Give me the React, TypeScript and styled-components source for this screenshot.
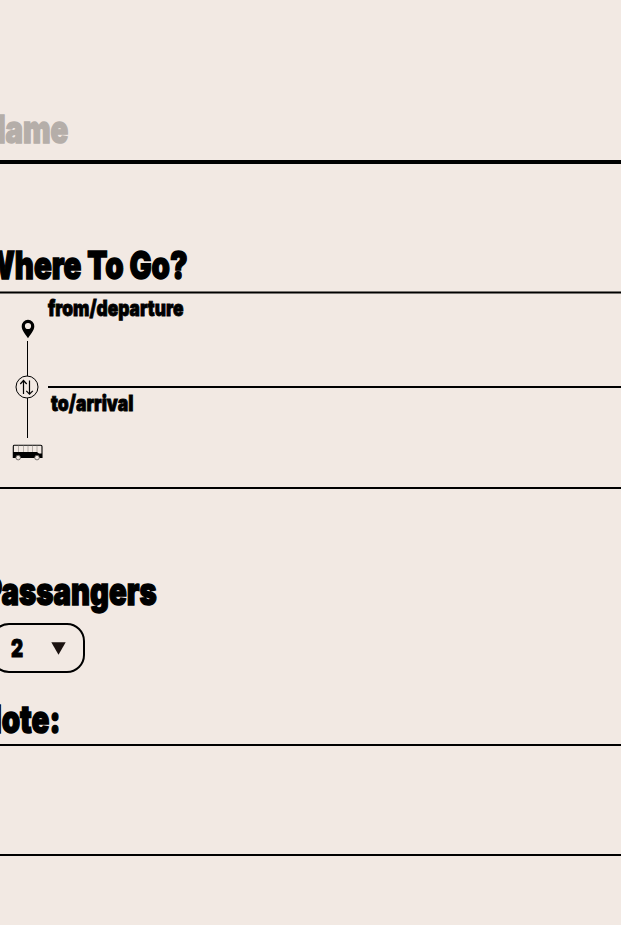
import React from "react";
import styled, { createGlobalStyle } from "styled-components";

const Global = createGlobalStyle`
  * { box-sizing: border-box; }
  html, body { margin: 0; background: #f2e9e3; overflow: hidden; }
`;

const Page = styled.main`
  height: 925px;
  overflow: hidden;
  background: #f2e9e3;
  color: #000;
  font-family: Inter, "Liberation Sans", sans-serif;
  font-weight: 900;
`;

const Poster = styled.span<{ $size: number; $squeeze: number; $muted?: boolean }>`
  display: block;
  width: max-content;
  font-size: ${(p) => p.$size}px;
  line-height: 40px;
  white-space: nowrap;
  color: ${(p) => (p.$muted ? "#b5aea9" : "#000")};
  -webkit-text-stroke: ${(p) => p.$size / 26}px currentColor;
  transform: scaleX(${(p) => p.$squeeze});
  transform-origin: 0 50%;
`;

const NameField = styled.section`
  height: 164px;
  padding: 109px 0 0;
  margin-left: -17px;
  border-bottom: 4px solid #000;
`;

const Heading = styled.h2<{ $top: number; $height: number; $start?: number }>`
  margin: 0 0 0 ${(p) => p.$start ?? -17}px;
  font: inherit;
  height: ${(p) => p.$height}px;
  padding-top: ${(p) => p.$top}px;
`;

const Route = styled.section`
  display: grid;
  grid-template-columns: 48px 1fr;
  height: 198px;
  margin-top: -1px;
  padding-top: 1px;
  border-top: 1px solid #77736f;
  border-bottom: 2px solid #000;
  box-shadow: inset 0 1px #000, inset 0 2px #77736f;
`;

const Track = styled.div`
  display: flex;
  flex-direction: column;
  padding-top: 26px;
`;

const Stops = styled.div`
  display: grid;
  grid-template-rows: 95px 1fr;
`;

const Stop = styled.div<{ $indent?: number; $last?: boolean }>`
  padding-left: ${(p) => p.$indent || 0}px;
  border-bottom: ${(p) => (p.$last ? "0" : "2px solid #000")};
  & > span { margin-top: -5px; }
`;

const Select = styled.button`
  display: flex;
  align-items: center;
  justify-content: space-between;
  width: 94px;
  height: 50px;
  margin: 0 0 0 -9px;
  padding: 0 17px 0 18px;
  border: 2px solid #000;
  border-radius: 18px;
  background: transparent;
  font: inherit;
`;

const Note = styled.div`
  height: 112px;
  border-top: 2px solid #000;
  border-bottom: 2px solid #000;
`;

const RouteIcon = () => (
  <svg width="48" height="144" viewBox="0 319 48 144" fill="none" stroke="#000">
    <path
      fill="#000"
      stroke="none"
      fillRule="evenodd"
      d="M28 319.800a6.300 6.300 0 0 0-6.300 6.400c0 4.100 3.300 7.200 6.300 12 3-4.800 6.300-7.900 6.300-12a6.300 6.300 0 0 0-6.300-6.400Zm0 3.100a3.100 3.100 0 1 1 0 6.200 3.100 3.100 0 0 1 0-6.200Z"
    />
    <path d="M27.500 341v35M27.500 398v40" />
    <circle cx="27" cy="387" r="11" strokeWidth="1" />
    <path d="M23.500 394V380.500M20.300 384l3.200-3.500 3.200 3.500M29.500 380.500v13.500M26.300 390.800l3.200 3.400 3.300-3.400" strokeWidth="1.200" />
    <path d="M14 445.200h26.700q1.300 0 1.300 1.300v11h-28.700v-11q0-1.300.7-1.300Z" strokeWidth="1.100" />
    <path d="M18.500 445.500v7M23.500 445.500v7M28 445.500v7M32.500 445.500v7M37 445.500v7" stroke="#8b8782" strokeWidth=".6" />
    <path d="M13 452h24l2 1.500h3v4.500H13Z" fill="#000" stroke="none" />
    <g fill="#f2e9e3" stroke="#55514e" strokeWidth=".8">
      <circle cx="18.200" cy="457.600" r="2.300" />
      <circle cx="37" cy="457.600" r="2.300" />
    </g>
  </svg>
);

const Caret = () => (
  <svg width="15" height="13" viewBox="0 0 15 13">
    <path d="M.3.300h14.400L7.500 12.700Z" fill="#1b1210" />
  </svg>
);

export default function App() {
  return (
    <>
      <Global />
      <Page>
        <NameField>
          <Poster $size={38} $squeeze={0.77} $muted>Name</Poster>
        </NameField>
        <Heading $top={81} $height={128}>
          <Poster $size={38} $squeeze={0.774}>Where To Go?</Poster>
        </Heading>
        <Route>
          <Track>
            <RouteIcon />
          </Track>
          <Stops>
            <Stop>
              <Poster $size={22} $squeeze={0.787}>from/departure</Poster>
            </Stop>
            <Stop $indent={3} $last>
              <Poster $size={22} $squeeze={0.797}>to/arrival</Poster>
            </Stop>
          </Stops>
        </Route>
        <Heading $top={82} $height={134}>
          <Poster $size={38} $squeeze={0.771}>Passangers</Poster>
        </Heading>
        <Select>
          <Poster $size={25} $squeeze={0.75}>2</Poster>
          <Caret />
        </Select>
        <Heading $top={26} $height={71} $start={-21}>
          <Poster $size={38} $squeeze={0.775}>Note:</Poster>
        </Heading>
        <Note />
      </Page>
    </>
  );
}
